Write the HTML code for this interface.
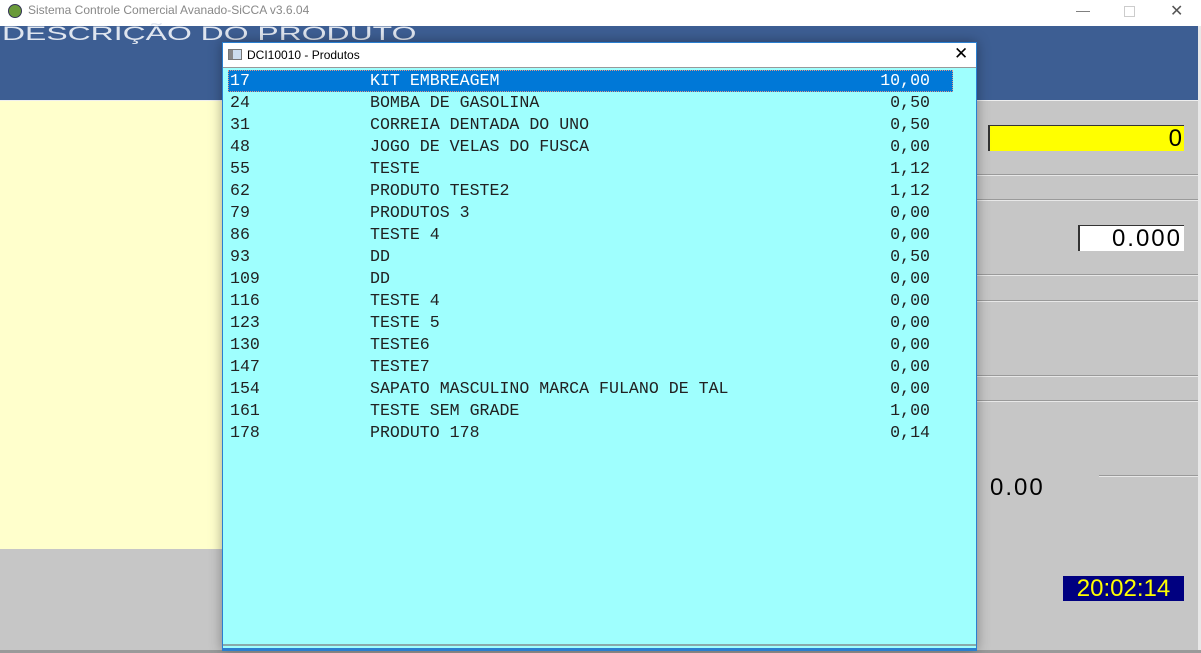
<!DOCTYPE html>
<html><head><meta charset="utf-8"><style>
*{margin:0;padding:0;box-sizing:border-box}
body{width:1201px;height:653px;overflow:hidden;position:relative;background:#c6c6c6;font-family:"Liberation Sans",sans-serif}
.abs{position:absolute}
.mono{font-family:"Liberation Mono",monospace;font-size:16.6px;line-height:22px;color:#222}
.row{position:absolute;left:228px;width:725px;height:22px}
.row span{position:absolute;top:0}
.c1{left:2px}.c2{left:142px}.c3{right:23px}
.hl{position:absolute;left:977px;width:221px;height:2px;background:#e8e8e8;border-top:1px solid #9a9a9a}
</style></head><body>
<div class="abs" style="left:0;top:0;width:1201px;height:26px;background:#fff"></div>
<div class="abs" style="left:8px;top:4px;width:14px;height:14px;border-radius:50%;background:#6a9a3a;border:1px solid #335"></div>
<div class="abs" style="left:28px;top:3px;font-size:12px;color:#888">Sistema Controle Comercial Avanado-SiCCA v3.6.04</div>
<div class="abs" style="left:1076px;top:2px;color:#777;font-size:14px">&#8212;</div>
<div class="abs" style="left:1124px;top:6px;width:11px;height:11px;border:1px solid #ccc"></div>
<div class="abs" style="left:1170px;top:1px;color:#555;font-size:16px">&#10005;</div>
<div class="abs" style="left:0;top:26px;width:1198px;height:74px;background:#3d5e93"></div>
<div class="abs" style="left:2px;top:24px;font-size:19px;line-height:22px;color:#dfe5ef;transform:scaleX(1.68);transform-origin:top left;white-space:nowrap">DESCRIÇÃO DO PRODUTO</div>
<div class="abs" style="left:0;top:100px;width:1198px;height:1px;background:#eee"></div>
<div class="abs" style="left:0;top:101px;width:230px;height:448px;background:#ffffcc"></div>
<div class="abs" style="left:1198px;top:26px;width:3px;height:627px;background:#e8e8e8"></div>
<div class="hl" style="top:174px"></div><div class="hl" style="top:199px"></div>
<div class="hl" style="top:274px"></div><div class="hl" style="top:300px"></div>
<div class="hl" style="top:375px"></div><div class="hl" style="top:400px"></div>
<div class="hl" style="top:475px;left:1099px;width:99px"></div>
<div class="abs" style="left:988px;top:125px;width:196px;height:26px;background:#ffff00;border-left:2px solid #333;border-top:1px solid #333;font-size:24px;text-align:right;line-height:26px;padding-right:2px">0</div>
<div class="abs" style="left:1078px;top:225px;width:106px;height:26px;background:#fff;border-left:2px solid #333;border-top:1px solid #333;font-size:24px;text-align:right;line-height:26px;padding-right:2px;letter-spacing:2px">0.000</div>
<div class="abs" style="left:990px;top:474px;font-size:24px;letter-spacing:2px">0.00</div>
<div class="abs" style="left:1063px;top:576px;width:121px;height:25px;background:#000080;color:#ffff00;font-size:24px;line-height:25px;text-align:center">20:02:14</div>
<div class="abs" style="left:0;top:650px;width:1201px;height:3px;background:#9a9a9a"></div>
<div class="abs" style="left:222px;top:42px;width:755px;height:609px;border:1px solid #2a7fd0;background:#9ffffe;box-shadow:0 0 12px rgba(0,0,0,.35)">
<div style="height:25px;background:#fff;border-bottom:1px solid #999;position:relative">
<div class="abs" style="left:5px;top:6px;width:14px;height:11px;border:1px solid #777;background:linear-gradient(90deg,#888 0 4px,#cde 4px)"></div>
<div class="abs" style="left:24px;top:5px;font-size:12px;color:#000">DCI10010 - Produtos</div>
<div class="abs" style="left:731px;top:1px;font-size:17px;color:#000">&#10005;</div>
</div>
<div class="abs" style="left:0;bottom:0;width:753px;height:6px;border-top:2px solid #8aa;border-bottom:2px solid #2a7fd0"></div>
</div>
<div class="mono">
<div class="row" style="top:70px;background:#0078d7;color:#fff;outline:1px dotted #d98;outline-offset:-1px"><span class="c1">17</span><span class="c2">KIT EMBREAGEM</span><span class="c3">10,00</span></div>
<div class="row" style="top:92px"><span class="c1">24</span><span class="c2">BOMBA DE GASOLINA</span><span class="c3">0,50</span></div>
<div class="row" style="top:114px"><span class="c1">31</span><span class="c2">CORREIA DENTADA DO UNO</span><span class="c3">0,50</span></div>
<div class="row" style="top:136px"><span class="c1">48</span><span class="c2">JOGO DE VELAS DO FUSCA</span><span class="c3">0,00</span></div>
<div class="row" style="top:158px"><span class="c1">55</span><span class="c2">TESTE</span><span class="c3">1,12</span></div>
<div class="row" style="top:180px"><span class="c1">62</span><span class="c2">PRODUTO TESTE2</span><span class="c3">1,12</span></div>
<div class="row" style="top:202px"><span class="c1">79</span><span class="c2">PRODUTOS 3</span><span class="c3">0,00</span></div>
<div class="row" style="top:224px"><span class="c1">86</span><span class="c2">TESTE 4</span><span class="c3">0,00</span></div>
<div class="row" style="top:246px"><span class="c1">93</span><span class="c2">DD</span><span class="c3">0,50</span></div>
<div class="row" style="top:268px"><span class="c1">109</span><span class="c2">DD</span><span class="c3">0,00</span></div>
<div class="row" style="top:290px"><span class="c1">116</span><span class="c2">TESTE 4</span><span class="c3">0,00</span></div>
<div class="row" style="top:312px"><span class="c1">123</span><span class="c2">TESTE 5</span><span class="c3">0,00</span></div>
<div class="row" style="top:334px"><span class="c1">130</span><span class="c2">TESTE6</span><span class="c3">0,00</span></div>
<div class="row" style="top:356px"><span class="c1">147</span><span class="c2">TESTE7</span><span class="c3">0,00</span></div>
<div class="row" style="top:378px"><span class="c1">154</span><span class="c2">SAPATO MASCULINO MARCA FULANO DE TAL</span><span class="c3">0,00</span></div>
<div class="row" style="top:400px"><span class="c1">161</span><span class="c2">TESTE SEM GRADE</span><span class="c3">1,00</span></div>
<div class="row" style="top:422px"><span class="c1">178</span><span class="c2">PRODUTO 178</span><span class="c3">0,14</span></div>
</div>
</body></html>
